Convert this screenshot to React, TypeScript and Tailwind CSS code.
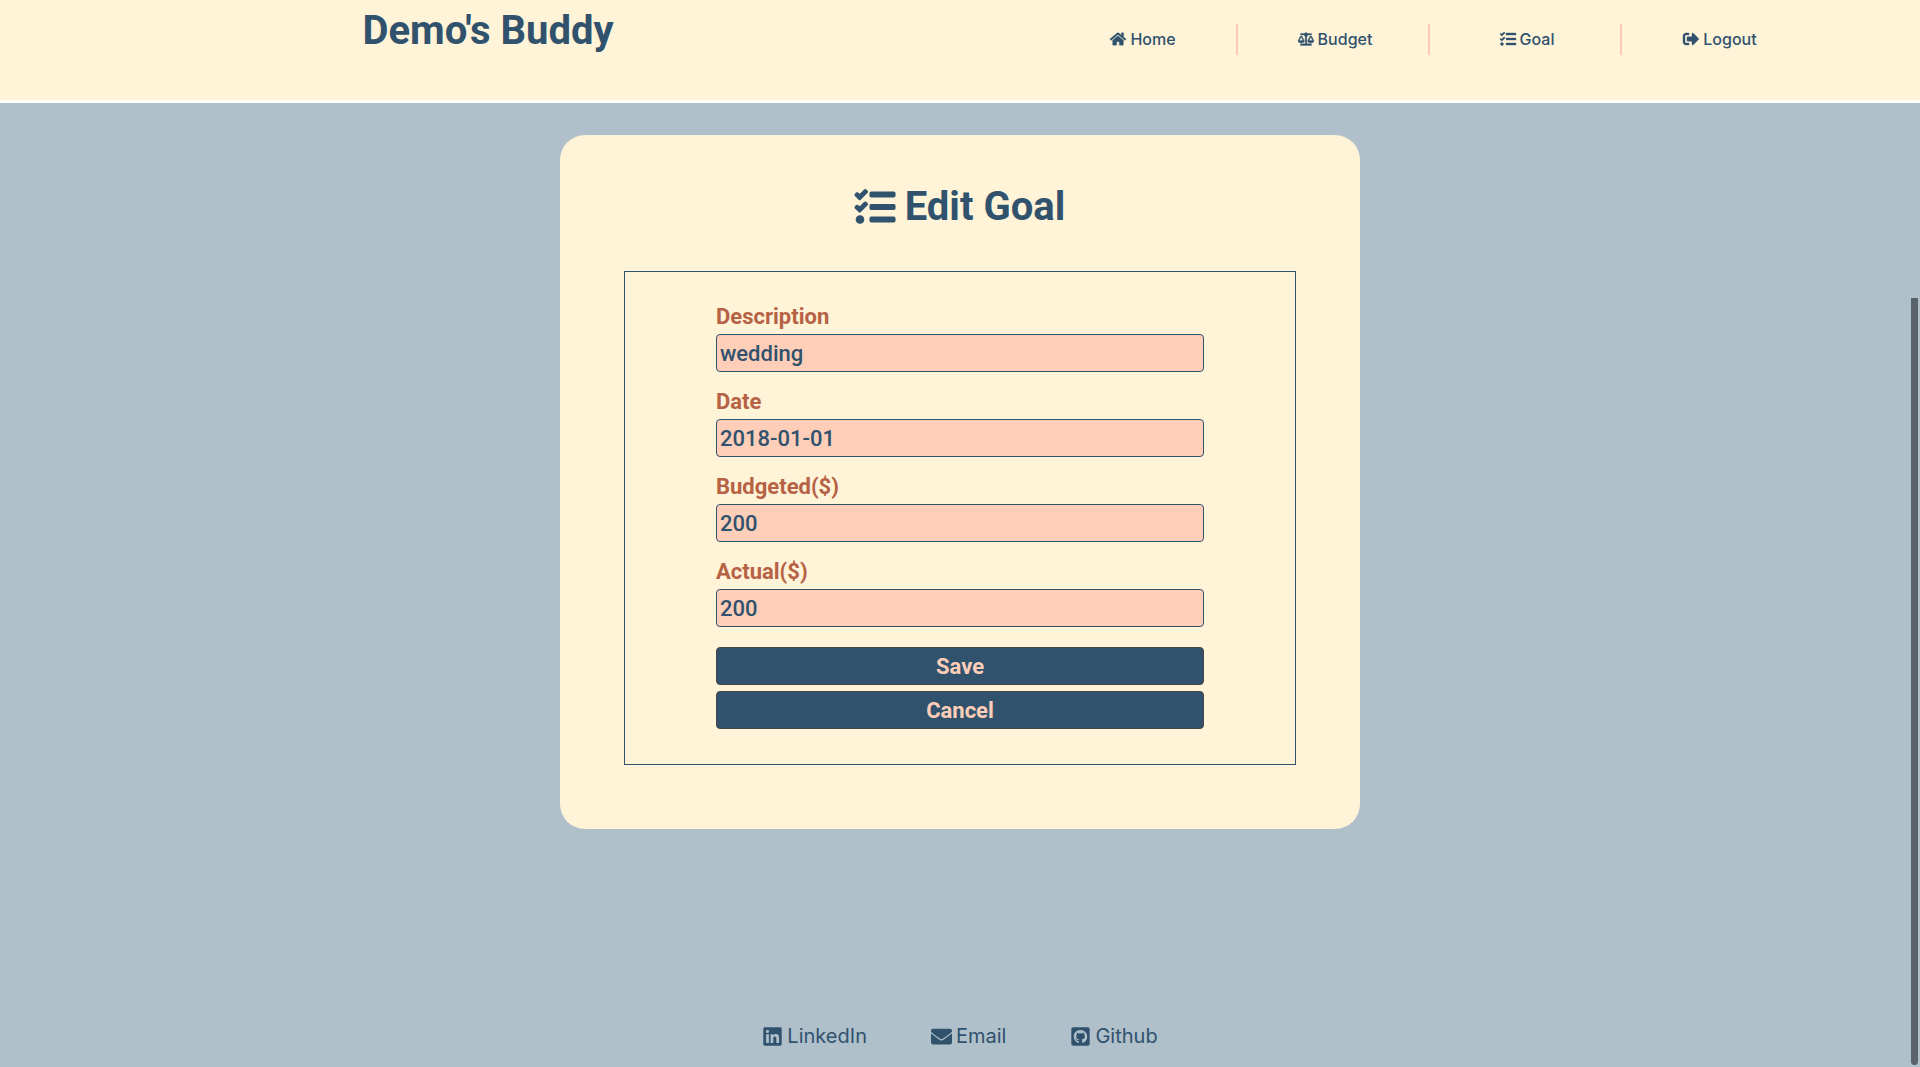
import { FaHome, FaBalanceScale, FaTasks, FaSignOutAlt, FaLinkedin, FaEnvelope, FaGithubSquare } from "react-icons/fa";

const links = [
  { label: "Home", icon: FaHome },
  { label: "Budget", icon: FaBalanceScale },
  { label: "Goal", icon: FaTasks },
  { label: "Logout", icon: FaSignOutAlt },
];

const fields = [
  { id: "description", label: "Description", value: "wedding" },
  { id: "date", label: "Date", value: "2018-01-01" },
  { id: "budgeted", label: "Budgeted($)", value: "200" },
  { id: "actual", label: "Actual($)", value: "200" },
];

const contacts = [
  { label: "LinkedIn", icon: FaLinkedin },
  { label: "Email", icon: FaEnvelope },
  { label: "Github", icon: FaGithubSquare },
];

export default function App() {
  return (
    <div className="relative flex min-h-screen flex-col bg-[#afc0cb] font-['Inter',sans-serif] text-[#30526d]">
      <header className="flex h-[103px] items-start border-b-[3px] border-white bg-[#fff3d8]">
        <h1 className="flex-1 pr-[70px] text-center font-['Roboto',sans-serif] text-[40px] leading-[62px] font-bold">
          Demo's Buddy
        </h1>
        <nav className="mt-6 mr-[106px] grid w-2/5 grid-cols-4">
          {links.map(({ label, icon: Icon }) => (
            <a
              key={label}
              href="#"
              className="flex h-[31px] items-center justify-center gap-1 border-r-2 border-[#ffc9b5] pb-px pl-1 text-base font-medium last:border-r-0"
            >
              <Icon className="h-4 w-auto overflow-visible stroke-[12]" />
              {label}
            </a>
          ))}
        </nav>
      </header>

      <main className="mx-auto mt-8 w-full max-w-[800px] rounded-[25px] bg-[#fff3d8] px-16 pt-10 pb-16">
        <h2 className="mb-6 flex h-[72px] items-center justify-center gap-2.5 pb-2 font-['Roboto',sans-serif] text-[40px] font-bold">
          <FaTasks className="overflow-visible stroke-[14]" />
          Edit Goal
        </h2>
        <form className="border border-[#30526d] px-[91px] pt-[29px] pb-[35px]">
          {fields.map(({ id, label, value }) => (
            <div key={id} className="mb-[14px]">
              <label
                htmlFor={id}
                className="block pb-px font-['Roboto',sans-serif] text-[22px] leading-8 font-bold text-[#b66245]"
              >
                {label}
              </label>
              <input
                id={id}
                defaultValue={value}
                className="block h-[38px] w-full rounded-[4px] border border-[#30526d] bg-[#ffceb8] px-[3px] font-['Roboto',sans-serif] text-[22px] font-medium"
              />
            </div>
          ))}
          <div className="mt-5 flex flex-col gap-1.5">
            <button type="submit" className="h-[38px] rounded-[4px] border border-[#454545] bg-[#30526d] font-['Roboto',sans-serif] text-[22px] font-bold text-[#ffceb8]">
              Save
            </button>
            <button type="button" className="h-[38px] rounded-[4px] border border-[#454545] bg-[#30526d] font-['Roboto',sans-serif] text-[22px] font-bold text-[#ffceb8]">
              Cancel
            </button>
          </div>
        </form>
      </main>

      <footer className="mt-auto flex justify-center gap-16 pb-[17px] text-xl">
        {contacts.map(({ label, icon: Icon }) => (
          <a key={label} href="#" className="flex items-center gap-1">
            <Icon className="h-[21px] w-auto" />
            {label}
          </a>
        ))}
      </footer>

      <div className="absolute top-[298px] right-[2px] bottom-[2px] w-[7px] rounded-b-full bg-[#5a626a]" />
    </div>
  );
}
